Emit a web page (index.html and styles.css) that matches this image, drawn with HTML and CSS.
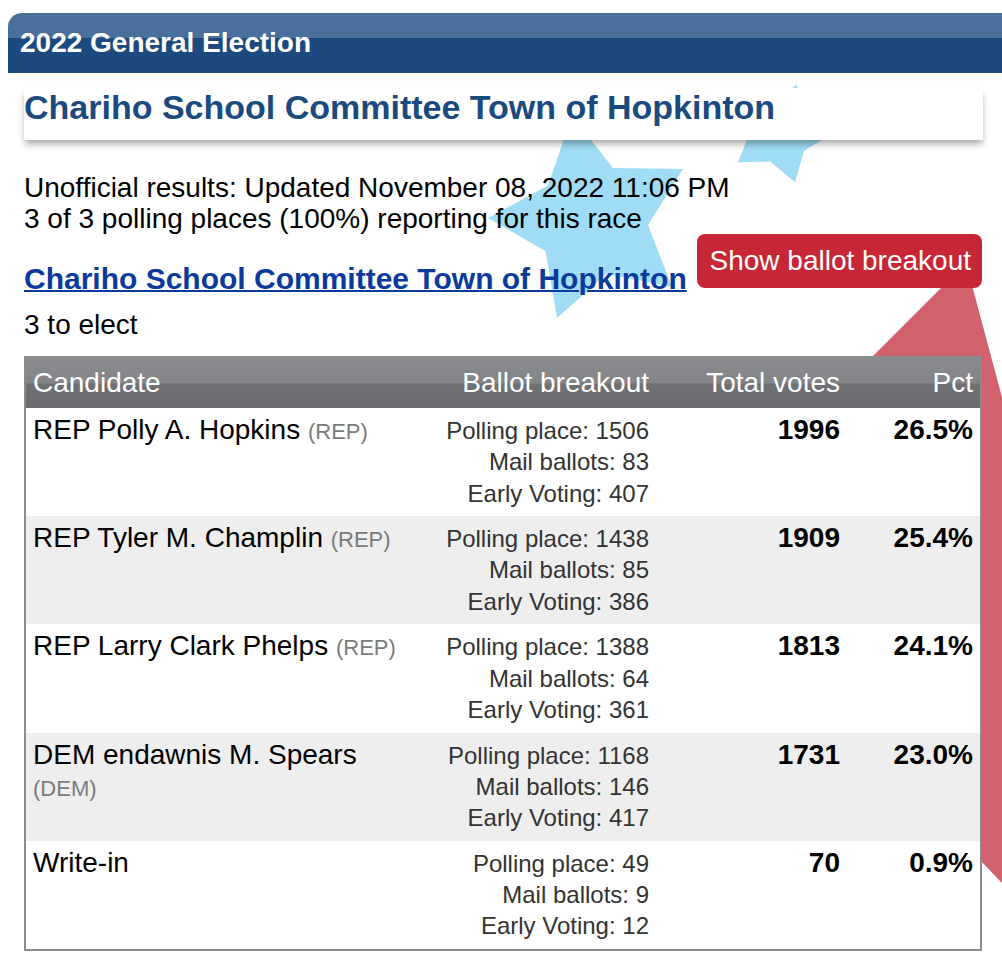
FILE: index.html
```html
<!DOCTYPE html>
<html lang="en">
<head>
<meta charset="utf-8">
<title>2022 General Election</title>
<link rel="stylesheet" href="styles.css">
</head>
<body>
<svg class="bg" width="1002" height="968" viewBox="0 0 1002 968" aria-hidden="true">
  <polygon class="star-blue" points="572,116 613,168 683,169 648,225 672,287 606.5,274 557,318 545.6,251.3 488,218 547.9,185.5"/>
  <polygon class="star-blue" points="796.7,84.4 804.6,115.8 831.4,133.9 804,151.1 795,182.2 770.2,161.4 737.9,162.5 750,132.5 739,102 771.2,104.3"/>
  <polygon class="star-red" points="966,263 1100,763 1100,985 860,735 860,369"/>
</svg>
<div class="page">
  <div class="banner">2022 General Election</div>
  <div class="content">
    <div class="card"><h1 class="title">Chariho School Committee Town of Hopkinton</h1></div>
    <p class="info">Unofficial results: Updated November 08, 2022 11:06 PM<br>3 of 3 polling places (100%) reporting for this race</p>
    <div class="race-head">
      <h2 class="race-name"><a href="#">Chariho School Committee Town of Hopkinton</a></h2>
      <button class="btn" type="button">Show ballot breakout</button>
    </div>
    <p class="elect">3 to elect</p>
    <div class="table-wrap">
      <table class="results">
        <colgroup>
          <col class="c-cand"><col class="c-break"><col class="c-total"><col class="c-pct">
        </colgroup>
        <thead>
          <tr>
            <th class="cand">Candidate</th>
            <th>Ballot breakout</th>
            <th>Total votes</th>
            <th>Pct</th>
          </tr>
        </thead>
        <tbody>
          <tr>
            <td class="cand">REP Polly A. Hopkins <span class="party">(REP)</span></td>
            <td class="break"><div class="bk">Polling place: 1506<br>Mail ballots: 83<br>Early Voting: 407</div></td>
            <td class="num">1996</td>
            <td class="num">26.5%</td>
          </tr>
          <tr class="alt">
            <td class="cand">REP Tyler M. Champlin <span class="party">(REP)</span></td>
            <td class="break"><div class="bk">Polling place: 1438<br>Mail ballots: 85<br>Early Voting: 386</div></td>
            <td class="num">1909</td>
            <td class="num">25.4%</td>
          </tr>
          <tr>
            <td class="cand">REP Larry Clark Phelps <span class="party">(REP)</span></td>
            <td class="break"><div class="bk">Polling place: 1388<br>Mail ballots: 64<br>Early Voting: 361</div></td>
            <td class="num">1813</td>
            <td class="num">24.1%</td>
          </tr>
          <tr class="alt">
            <td class="cand">DEM endawnis M. Spears <span class="party">(DEM)</span></td>
            <td class="break"><div class="bk">Polling place: 1168<br>Mail ballots: 146<br>Early Voting: 417</div></td>
            <td class="num">1731</td>
            <td class="num">23.0%</td>
          </tr>
          <tr>
            <td class="cand">Write-in</td>
            <td class="break"><div class="bk">Polling place: 49<br>Mail ballots: 9<br>Early Voting: 12</div></td>
            <td class="num">70</td>
            <td class="num">0.9%</td>
          </tr>
        </tbody>
      </table>
    </div>
  </div>
</div>
</body>
</html>
```

FILE: styles.css
```css
html, body {
  margin: 0;
  padding: 0;
  background: #fff;
  overflow: hidden;
}

body {
  position: relative;
  width: 1002px;
  height: 968px;
  font-family: "Liberation Sans", Arial, Helvetica, sans-serif;
  color: #000;
}

.bg {
  position: absolute;
  left: 0;
  top: 0;
  z-index: 0;
}

.star-blue { fill: #a0dcf6; }
.star-red { fill: #d1616c; }

.page {
  position: relative;
  z-index: 1;
  padding: 13px 0 0 8px;
}

.banner {
  height: 60px;
  line-height: 60px;
  padding-left: 12px;
  border-top-left-radius: 14px;
  background: linear-gradient(to bottom, #4a6f9a 0, #4a6f9a 25px, #1c4a7e 25px, #1c4a7e 100%);
  color: #fff;
  font-weight: bold;
  font-size: 28px;
  white-space: nowrap;
}

.content {
  margin-left: 16px;
  width: 958px;
}

.card {
  margin-top: 15px;
  margin-right: -1px;
  padding: 0 0 14px 0;
  background: #fff;
  box-shadow: 0 5px 7px -1px rgba(0, 0, 0, 0.35);
}

.title {
  margin: 0;
  font-size: 34px;
  line-height: 38px;
  font-weight: bold;
  color: #1b4a7f;
  white-space: nowrap;
}

.info {
  margin: 31.8px 0 0;
  font-size: 28px;
  line-height: 31px;
}

.race-head {
  display: flex;
  justify-content: space-between;
  align-items: flex-start;
}

.race-name {
  margin: 28px 0 0;
  font-size: 30px;
  line-height: 34px;
  font-weight: bold;
}

.race-name a {
  color: #0a3a9b;
  text-decoration: underline;
  text-decoration-thickness: 2px;
}

.btn {
  margin: 0;
  padding: 11px 11px 11px 12px;
  border: 0;
  border-radius: 8px;
  background: #c62635;
  color: #fff;
  font-family: "Liberation Sans", Arial, Helvetica, sans-serif;
  font-size: 28px;
  line-height: 32px;
  white-space: nowrap;
}

.elect {
  margin: 13.6px 0 0;
  font-size: 28px;
  line-height: 32px;
}

.table-wrap {
  margin-top: 14.6px;
  border: 2px solid #8b8b8b;
}

.results {
  width: 100%;
  border-collapse: collapse;
  border-spacing: 0;
  table-layout: fixed;
}

.c-cand { width: 394px; }
.c-break { width: 236px; }
.c-total { width: 191px; }
.c-pct { width: 133px; }

.results th {
  padding: 9.5px 7px 8.5px;
  background: linear-gradient(to bottom, #8a8b8f 0, #838488 50%, #707175 52%, #6b6c70 100%);
  color: #fff;
  font-weight: normal;
  font-size: 28px;
  line-height: 32px;
  text-align: right;
  white-space: nowrap;
}

.results th.cand { text-align: left; }

.results td {
  padding: 6px 7px 7.2px;
  vertical-align: baseline;
  background: #fff;
  font-size: 28px;
  line-height: 32px;
}

.results tr.alt td { background: #eeeeee; }

.results td.break { text-align: right; }

.bk {
  font-size: 24px;
  line-height: 31.33px;
  color: #333;
  white-space: nowrap;
}

.results td.num {
  text-align: right;
  font-weight: bold;
}

.party {
  font-size: 22px;
  color: #7b7b7b;
}
```
